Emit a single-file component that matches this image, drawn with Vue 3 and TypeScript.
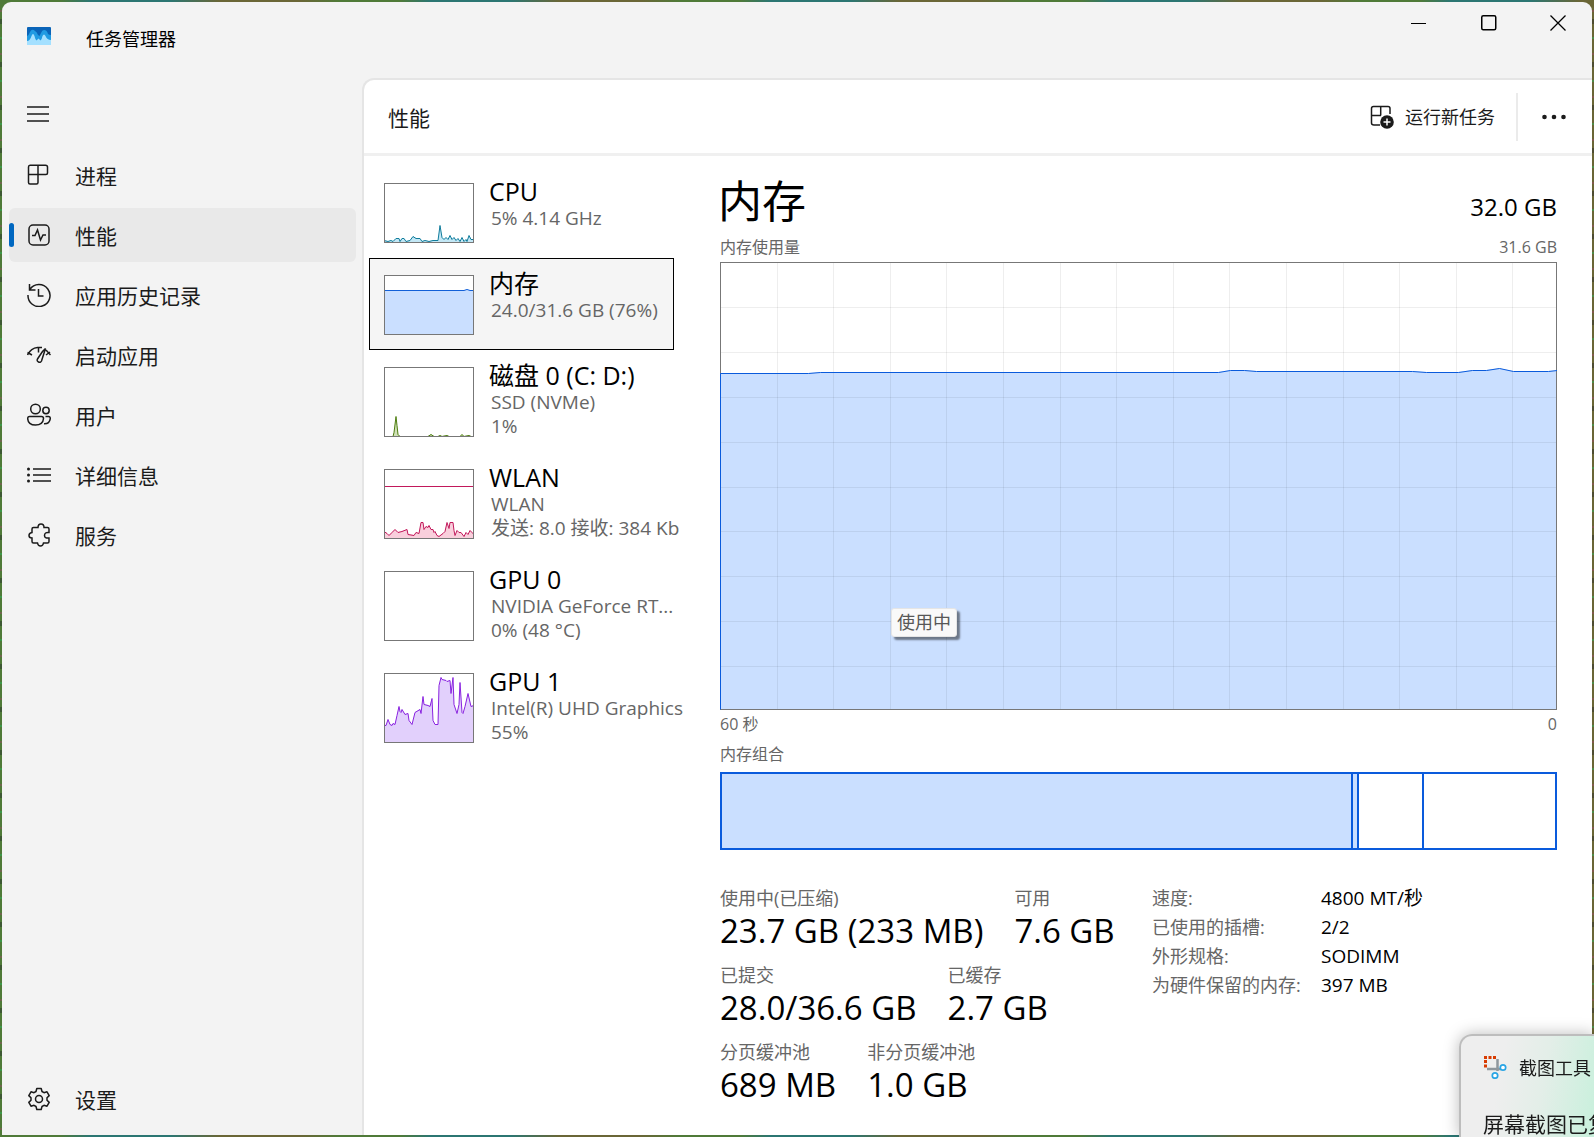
<script setup lang="ts">
type Point = [number, number]

interface Device {
  name: string
  lines: string[]
  color: string
  fill: string
  height: number
  points: Point[]
  limit?: number
  selected?: boolean
}

const navItems = [
  { id: 'processes', label: '进程' },
  { id: 'performance', label: '性能' },
  { id: 'history', label: '应用历史记录' },
  { id: 'startup', label: '启动应用' },
  { id: 'users', label: '用户' },
  { id: 'details', label: '详细信息' },
  { id: 'services', label: '服务' },
]
const current = 'performance'

const devices: Device[] = [
  {
    name: 'CPU', lines: ['5% 4.14 GHz'], color: '#117c9b', fill: '#c3e7f5', height: 60,
    points: [[0, 57], [4, 58], [7, 57], [9, 58], [12, 55], [15, 55], [16, 58], [18, 55], [20, 55], [22, 58], [26, 57], [29, 53], [32, 55], [36, 55], [38, 58], [41, 57], [45, 58], [49, 57], [54, 57], [56, 42], [58, 54], [60, 56], [62, 54], [64, 56], [66, 52], [68, 56], [70, 54], [72, 57], [74, 55], [76, 58], [78, 54], [80, 58], [82, 56], [83, 58], [85, 52], [87, 56], [90, 56]],
  },
  {
    name: '内存', lines: ['24.0/31.6 GB (76%)'], color: '#1260d8', fill: '#cadfff', height: 60, selected: true,
    points: [[0, 15], [80, 15], [83, 14], [86, 15], [90, 15]],
  },
  {
    name: '磁盘 0 (C: D:)', lines: ['SSD (NVMe)', '1%'], color: '#4d7d0f', fill: '#cfe0b6', height: 70,
    points: [[0, 69], [9, 69], [10, 65], [12, 49], [13, 58], [14, 67], [16, 69], [40, 69], [44, 69], [47, 67], [50, 69], [54, 69], [56, 68], [58, 69], [63, 68], [65, 69], [76, 69], [78, 67], [80, 69], [85, 68], [87, 69], [90, 69]],
  },
  {
    name: 'WLAN', lines: ['WLAN', '发送: 8.0 接收: 384 Kb'], color: '#c2185b', fill: '#f9cfdc', height: 70, limit: 17,
    points: [[0, 62], [3, 64], [5, 66], [8, 63], [11, 60], [14, 63], [18, 62], [23, 60], [24, 65], [30, 66], [32, 63], [35, 64], [37, 53], [39, 53], [40, 60], [42, 57], [44, 58], [45, 56], [47, 60], [49, 60], [50, 63], [51, 62], [53, 66], [55, 67], [59, 64], [61, 62], [63, 53], [65, 59], [66, 53], [69, 53], [70, 61], [71, 66], [73, 61], [75, 63], [77, 63], [80, 67], [82, 63], [84, 65], [86, 61], [88, 63], [90, 65]],
  },
  { name: 'GPU 0', lines: ['NVIDIA GeForce RT...', '0% (48 °C)'], color: '#8a2be2', fill: '#e2d0fc', height: 70, points: [] },
  {
    name: 'GPU 1', lines: ['Intel(R) UHD Graphics', '55%'], color: '#8a23e0', fill: '#e2d0fc', height: 70,
    points: [[0, 52], [2, 52], [4, 46], [6, 51], [8, 52], [9, 50], [11, 51], [13, 42], [15, 33], [16, 38], [17, 39], [18, 36], [21, 41], [24, 40], [25, 47], [28, 51], [31, 39], [36, 36], [37, 40], [39, 23], [40, 31], [44, 32], [46, 33], [48, 25], [49, 47], [51, 51], [54, 51], [55, 12], [57, 4], [58, 6], [62, 7], [63, 8], [66, 7], [67, 20], [69, 4], [70, 31], [73, 40], [75, 31], [76, 9], [78, 39], [79, 40], [81, 33], [84, 20], [87, 33], [90, 32]],
  },
]

const memoryHistory: Point[] = [[0, 111], [88, 111], [100, 110], [498, 110], [510, 108], [524, 108], [536, 109], [692, 109], [706, 110], [738, 110], [752, 108], [766, 108], [779, 106], [793, 109], [828, 109], [837, 108]]
const columns = Array.from({ length: 14 }, (_, i) => Math.round((i + 1) * 56.6))
const rows = Array.from({ length: 9 }, (_, i) => Math.round((i + 1) * 44.9))

const composition = [
  { id: 'in-use', width: 629, used: true },
  { id: 'modified', width: 4, used: true },
  { id: 'standby', width: 63, used: false },
  { id: 'free', width: 131, used: false },
]

const stats = [
  [{ label: '使用中(已压缩)', value: '23.7 GB (233 MB)' }, { label: '可用', value: '7.6 GB' }],
  [{ label: '已提交', value: '28.0/36.6 GB' }, { label: '已缓存', value: '2.7 GB' }],
  [{ label: '分页缓冲池', value: '689 MB' }, { label: '非分页缓冲池', value: '1.0 GB' }],
]

const facts = [
  ['速度:', '4800 MT/秒'],
  ['已使用的插槽:', '2/2'],
  ['外形规格:', 'SODIMM'],
  ['为硬件保留的内存:', '397 MB'],
]

function toLine(points: Point[]): string {
  return points.map(([x, y]) => `${x},${y}`).join(' ')
}

function toArea(points: Point[], height: number): string {
  const last = points[points.length - 1]
  return last ? `0,${height} ${toLine(points)} ${last[0]},${height}` : ''
}
</script>

<template>
  <div class="desktop">
    <div class="window">
      <header class="titlebar">
        <svg class="app-icon" viewBox="0 0 24 18" aria-hidden="true">
          <rect width="24" height="18" rx="1" fill="#0a64b8" />
          <path d="M0 9Q2 8 3 5Q5 1 8 4Q10 5 11 8L12.500 9L14 6Q15 3 17 3Q20 3 21 7Q22 8 24 8V18H0Z" fill="#219be2" />
          <path d="M0 14Q3 14 4.500 9Q6 5 7.500 9Q8 12 9.500 13.500L11.500 11.500L13.500 13.500Q15 12 15.500 9Q17 6 18.500 9Q20 13 24 13V18H0Z" fill="#a4e0ff" />
        </svg>
        <h1>任务管理器</h1>
        <div class="window-buttons">
          <button type="button" aria-label="最小化"><svg viewBox="0 0 16 16"><path d="M0 8.5H15" /></svg></button>
          <button type="button" aria-label="最大化"><svg viewBox="0 0 16 16"><rect x=".75" y=".75" width="14" height="14" rx="1.5" stroke-width="1.5" /></svg></button>
          <button type="button" aria-label="关闭"><svg viewBox="0 0 16 16"><path d="M.5.5L15.5 15.5M15.5.5L.5 15.5" stroke-width="1.3" /></svg></button>
        </div>
      </header>

      <div class="body">
        <nav class="sidebar">
          <button type="button" class="menu" aria-label="菜单">
            <svg viewBox="0 0 24 24"><path d="M0 5H22M0 12H22M0 19H22" /></svg>
          </button>
          <button v-for="item in navItems" :key="item.id" type="button" class="nav-item" :class="{ active: item.id === current }">
            <svg v-if="item.id === 'processes'" viewBox="0 0 24 24"><path d="M3 2.2H18.500Q20.500 2.200 20.500 4V10Q20.500 11.500 19 11.500H1.500V4Q1.500 2.200 3 2.200ZM11 2.200V19.500Q11 21 9.500 21H3Q1.500 21 1.500 19.500V11.500" /></svg>
            <svg v-else-if="item.id === 'performance'" viewBox="0 0 24 24"><rect x="2" y="2" width="20" height="20" rx="4" /><path d="M5 12.500H8L10.500 7L13.500 17L16 12H19" /></svg>
            <svg v-else-if="item.id === 'history'" viewBox="0 0 24 24"><path d="M2.500 1V7H8.500M2.800 6.500A11 11 0 1 1 1 12M11.500 6V13H16.500" /></svg>
            <svg v-else-if="item.id === 'startup'" viewBox="0 0 24 24"><path d="M.5 12Q4 5 10.500 4.500H15M.5 9.500L5 12M11.500 4.500V9.500M18.500 5.500L14.500 18Q13.500 20 11.500 19Q9.500 18 10.500 16L15.500 8.500ZM19 7L23.500 12M23 9L19 12" /></svg>
            <svg v-else-if="item.id === 'users'" viewBox="0 0 24 24"><circle cx="8.500" cy="6" r="4.800" /><circle cx="19" cy="7.500" r="3.200" /><path d="M2.500 13.500H14.500Q16.500 13.500 16.500 15.500Q16 22 8.500 22Q1 22 .7 15.500Q.7 13.500 2.500 13.500ZM18.500 13.500H21.500Q23.300 13.500 23.300 15.500Q22.500 21 17 20.700" /></svg>
            <svg v-else-if="item.id === 'details'" viewBox="0 0 24 24"><path d="M6 6H24M6 12H24M6 18H24" /><circle class="dot" cx="1.500" cy="6" r="1.500" /><circle class="dot" cx="1.500" cy="12" r="1.500" /><circle class="dot" cx="1.500" cy="18" r="1.500" /></svg>
            <svg v-else viewBox="0 0 24 24"><path d="M6.500 4.500H11Q11 1 14 1Q17 1 17 4.500H20.500Q22 4.500 22 6V9.500Q17.500 9 17.500 12.500Q17.500 15.500 22 15V18.500Q22 20 20.500 20H16.500Q16 23 13.500 23Q11 23 10.500 20H6.500Q5 20 5 18.500V15Q2 15 2 12.500Q2 10 5 9.500V6Q5 4.500 6.500 4.500Z" /></svg>
            <span>{{ item.label }}</span>
          </button>
          <button type="button" class="nav-item settings">
            <svg viewBox="0 0 24 24"><path d="M9.800 1.500H14.200L15 4.500L17 5.700L20 4.800L22.200 8.600L20 10.800V13.200L22.200 15.400L20 19.200L17 18.300L15 19.500L14.200 22.500H9.800L9 19.500L7 18.300L4 19.200L1.800 15.400L4 13.200V10.800L1.800 8.600L4 4.800L7 5.700L9 4.500Z" stroke-linejoin="round" /><circle cx="12" cy="12" r="3.500" /></svg>
            <span>设置</span>
          </button>
        </nav>

        <main class="panel">
          <div class="toolbar">
            <h2>性能</h2>
            <button type="button" class="new-task">
              <svg viewBox="0 0 24 24"><path d="M10 20H4Q1.500 20 1.500 18V3.500Q1.500 1.500 3.500 1.500H18Q20 1.500 20 3.500V9M10.700 1.500V10.500M1.500 10.500H11" fill="none" stroke="#1b1b1b" stroke-width="1.500" /><circle cx="17" cy="17" r="6.800" fill="#1b1b1b" /><path d="M17 13.500V20.500M13.500 17H20.500" stroke="#fff" stroke-width="1.500" /></svg>
              <span>运行新任务</span>
            </button>
            <button type="button" class="more" aria-label="更多">
              <svg viewBox="0 0 24 6"><circle cx="2.500" cy="3" r="2.300" /><circle cx="12" cy="3" r="2.300" /><circle cx="21.500" cy="3" r="2.300" /></svg>
            </button>
          </div>

          <div class="content">
            <div class="devices">
              <button v-for="device in devices" :key="device.name" type="button" class="device" :class="{ selected: device.selected }">
                <svg class="thumb" :viewBox="`0 0 90 ${device.height}`" :style="{ height: `${device.height}px` }" aria-hidden="true">
                  <rect width="90" :height="device.height" fill="#fff" />
                  <polygon :points="toArea(device.points, device.height)" :fill="device.fill" />
                  <polyline :points="toLine(device.points)" :stroke="device.color" fill="none" transform="translate(0 .5)" />
                  <line v-if="device.limit" x2="90" :y1="device.limit + 0.5" :y2="device.limit + 0.5" :stroke="device.color" />
                  <rect x=".5" y=".5" width="89" :height="device.height - 1" fill="none" stroke="#777" />
                </svg>
                <span class="device-text">
                  <span class="device-name">{{ device.name }}</span>
                  <span v-for="line in device.lines" :key="line" class="device-line">{{ line }}</span>
                </span>
              </button>
            </div>

            <section class="detail">
              <div class="detail-head">
                <h3>内存</h3>
                <span class="capacity">32.0 GB</span>
              </div>
              <div class="caption"><span>内存使用量</span><span>31.6 GB</span></div>
              <div class="chart">
                <svg viewBox="0 0 837 448" preserveAspectRatio="none" aria-hidden="true">
                  <rect width="837" height="448" fill="#fff" />
                  <polygon :points="toArea(memoryHistory, 448)" fill="#cadfff" />
                  <g class="grid-lines">
                    <line v-for="x in columns" :key="`c${x}`" :x1="x + 0.5" :x2="x + 0.5" y2="448" />
                    <line v-for="y in rows" :key="`r${y}`" :y1="y + 0.5" :y2="y + 0.5" x2="837" />
                  </g>
                  <rect class="frame" x=".5" y=".5" width="836" height="447" />
                  <polyline class="usage" :points="`0,447 ${toLine(memoryHistory)}`" transform="translate(.5 .5)" />
                </svg>
                <span class="tooltip" role="tooltip">使用中</span>
              </div>
              <div class="caption axis"><span>60 秒</span><span>0</span></div>
              <div class="caption"><span>内存组合</span></div>
              <div class="composition">
                <div v-for="part in composition" :key="part.id" class="part" :class="{ used: part.used }" :style="{ flexGrow: part.width }"></div>
              </div>
              <div class="summary">
                <div class="stats">
                  <div v-for="(row, index) in stats" :key="index" class="stat-row">
                    <div v-for="stat in row" :key="stat.label">
                      <div class="stat-label">{{ stat.label }}</div>
                      <div class="stat-value">{{ stat.value }}</div>
                    </div>
                  </div>
                </div>
                <table class="facts">
                  <tbody>
                    <tr v-for="[label, value] in facts" :key="label">
                      <th scope="row">{{ label }}</th>
                      <td>{{ value }}</td>
                    </tr>
                  </tbody>
                </table>
              </div>
            </section>
          </div>
        </main>
      </div>
    </div>

    <aside class="toast">
      <div class="toast-head">
        <svg viewBox="0 0 24 24" aria-hidden="true">
          <path d="M1 2.500H13M2.500 5V14" fill="none" stroke="#d83b01" stroke-width="3" stroke-dasharray="3 1.500" />
          <path d="M14.500 4V16M4 14H18" fill="none" stroke="#8f979d" stroke-width="2.500" />
          <circle cx="20" cy="12.500" r="2.700" fill="#fff" stroke="#2aa5e4" stroke-width="1.700" />
          <circle cx="12" cy="20.500" r="2.700" fill="#fff" stroke="#2aa5e4" stroke-width="1.700" />
        </svg>
        <span>截图工具</span>
      </div>
      <p>屏幕截图已复</p>
    </aside>
  </div>
</template>

<style>
body {
  margin: 0;
}
</style>

<style scoped>
.desktop {
  box-sizing: border-box;
  display: flex;
  min-height: 100vh;
  padding: 2px;
  background:
    repeating-linear-gradient(0deg, #0000 0 7px, #b03a7855 7px 9px, #0000 9px 23px, #20c06066 23px 25px, #0000 25px 38px, #22262c66 38px 43px),
    repeating-linear-gradient(90deg, #4f7a38 0 60px, #2b7672 90px 170px, #6a6636 220px 300px, #4f7a38 340px);
  color: #000;
  font-family: "Open Sans", "Noto Sans CJK SC", sans-serif;
}

h1, h2, h3, p {
  margin: 0;
  font-weight: 400;
}

button {
  padding: 0;
  border: 0;
  background: none;
  color: inherit;
  font: inherit;
  text-align: left;
}

.window {
  display: flex;
  flex: 1;
  flex-direction: column;
  min-width: 0;
  overflow: hidden;
  border-radius: 9px 9px 0 0;
  background: #f3f3f3;
}

.titlebar {
  display: flex;
  height: 76px;
}

.app-icon {
  width: 24px;
  height: 18px;
  margin: 25px 35px 0 25px;
}

h1 {
  margin-top: 24px;
  font-size: 18px;
  line-height: 26px;
}

.window-buttons {
  display: flex;
  margin-left: auto;
}

.window-buttons button {
  display: flex;
  justify-content: center;
  width: 70px;
  padding-top: 13px;
}

.window-buttons button:last-child {
  width: 68px;
}

.window-buttons svg {
  width: 16px;
  height: 16px;
  fill: none;
  stroke: #000;
}

.body {
  display: flex;
  flex: 1;
}

.sidebar {
  display: flex;
  flex: 0 0 360px;
  flex-direction: column;
  box-sizing: border-box;
  gap: 6px;
  padding: 9px 6px 9px 7px;
}

.sidebar svg {
  flex: none;
  width: 24px;
  height: 24px;
  fill: none;
  stroke: #1b1b1b;
  stroke-width: 1.5;
}

.sidebar .dot {
  fill: #1b1b1b;
  stroke: none;
}

.menu,
.nav-item {
  position: relative;
  display: flex;
  align-items: center;
  gap: 24px;
  height: 54px;
  padding-left: 18px;
  border-radius: 6px;
  color: #1b1b1b;
  font-size: 21px;
  line-height: 30px;
}

.menu {
  margin-bottom: 1px;
}

.nav-item span {
  padding-top: 2px;
}

.active {
  background: #e9e9e9;
}

.active::before {
  position: absolute;
  left: 0;
  width: 5px;
  height: 24px;
  border-radius: 3px;
  background: #0067c0;
  content: "";
}

.settings {
  margin-top: auto;
}

.panel {
  display: flex;
  flex: 1;
  flex-direction: column;
  min-width: 0;
  border: solid #e5e5e5;
  border-width: 2px 0 0 2px;
  border-top-left-radius: 12px;
  background: #fff;
}

.toolbar {
  display: flex;
  align-items: center;
  height: 73px;
  padding-left: 24px;
  border-bottom: 3px solid #f0f0f0;
}

h2 {
  padding-top: 2px;
  color: #1b1b1b;
  font-size: 21px;
  line-height: 30px;
}

.new-task {
  display: flex;
  align-items: center;
  gap: 11px;
  margin-left: auto;
  padding-right: 21px;
  color: #1b1b1b;
  font-size: 18px;
  line-height: 26px;
}

.new-task svg {
  width: 24px;
  height: 24px;
}

.more {
  display: flex;
  align-items: center;
  height: 48px;
  padding: 0 26px 0 24px;
  border-left: 2px solid #ebebeb;
}

.more svg {
  width: 24px;
  height: 6px;
  fill: #1b1b1b;
}

.content {
  display: flex;
  flex: 1;
}

.devices {
  display: flex;
  flex: 0 0 356px;
  flex-direction: column;
  box-sizing: border-box;
  min-width: 0;
  padding: 10px 46px 0 5px;
}

.device {
  display: flex;
  align-items: flex-start;
  gap: 15px;
  min-width: 0;
  padding: 11px 0 14px 14px;
  border: 1px solid transparent;
  white-space: pre;
}

.selected {
  border-color: #000;
  background: #f5f5f5;
}

.thumb {
  flex: none;
  width: 90px;
  margin-top: 5px;
}

.device-text {
  display: flex;
  flex-direction: column;
  height: 75px;
  margin-bottom: -10px;
}

.device-name {
  margin-bottom: 2px;
  font-size: 25px;
  line-height: 26px;
}

.device-line {
  padding-left: 2px;
  color: #666;
  font-size: 19px;
  line-height: 24px;
}

.detail {
  display: flex;
  flex: 1;
  flex-direction: column;
  min-width: 0;
  padding: 10px 35px 18px 0;
}

.detail-head {
  display: flex;
  align-items: center;
  justify-content: space-between;
  height: 70px;
}

h3 {
  margin-left: -2px;
  font-size: 44px;
  line-height: 60px;
}

.capacity {
  padding-top: 12px;
  font-size: 24px;
  line-height: 30px;
}

.caption {
  display: flex;
  justify-content: space-between;
  height: 26px;
  color: #666;
  font-size: 16px;
  line-height: 23px;
}

.axis {
  padding: 3px 0 4px;
}

.chart {
  position: relative;
  flex: 1 0 240px;
}

.chart svg {
  position: absolute;
  width: 100%;
  height: 100%;
}

.grid-lines {
  stroke: #0001;
  shape-rendering: crispEdges;
}

.frame {
  fill: none;
  stroke: #777;
}

.usage {
  fill: none;
  stroke: #0a5bdc;
}

.tooltip {
  position: absolute;
  top: 346px;
  left: 171px;
  padding: 0 5px;
  border: 1px solid #e5e5e5;
  border-radius: 3px;
  background: #f9f9f9;
  box-shadow: 3px 3px 2px #0007;
  color: #575757;
  font-size: 18px;
  line-height: 27px;
}

.composition {
  display: flex;
  gap: 2px;
  height: 74px;
  margin-top: 3px;
  border: 2px solid #0a5bdc;
  background: #0a5bdc;
}

.part {
  flex-basis: 0;
  background: #fff;
}

.used {
  background: #cadfff;
}

.summary {
  display: flex;
  margin-top: 36px;
}

.stats {
  flex: 0 0 432px;
}

.stat-row {
  display: flex;
  gap: 31px;
  height: 77px;
  white-space: nowrap;
}

.stat-label {
  margin-bottom: 1px;
  color: #666;
  font-size: 18px;
  line-height: 24px;
}

.stat-value {
  font-size: 33px;
  line-height: 40px;
}

.facts {
  align-self: flex-start;
  border-collapse: collapse;
  font-size: 18px;
  line-height: 24px;
  white-space: nowrap;
}

.facts th,
.facts td {
  padding: 0 0 5px;
  font-weight: 400;
  text-align: left;
}

.facts th {
  width: 169px;
  color: #666;
}

.facts td {
  font-size: 19px;
}

.toast {
  position: fixed;
  right: 0;
  bottom: 0;
  box-sizing: border-box;
  width: 135px;
  height: 103px;
  padding: 17px 0 0 22px;
  overflow: hidden;
  border: solid #bdbdbd;
  border-width: 2px 0 0 2px;
  border-top-left-radius: 13px;
  background: linear-gradient(100deg, #eee 30%, #e3eee8 60%, #c8f0dc);
  box-shadow: 0 0 16px #0004;
  color: #1b1b1b;
  white-space: nowrap;
}

.toast-head {
  display: flex;
  align-items: center;
  gap: 12px;
  height: 28px;
  font-size: 18px;
}

.toast-head svg {
  flex: none;
  width: 24px;
  height: 24px;
}

.toast p {
  margin-top: 28px;
  font-size: 21px;
  line-height: 30px;
}
</style>
